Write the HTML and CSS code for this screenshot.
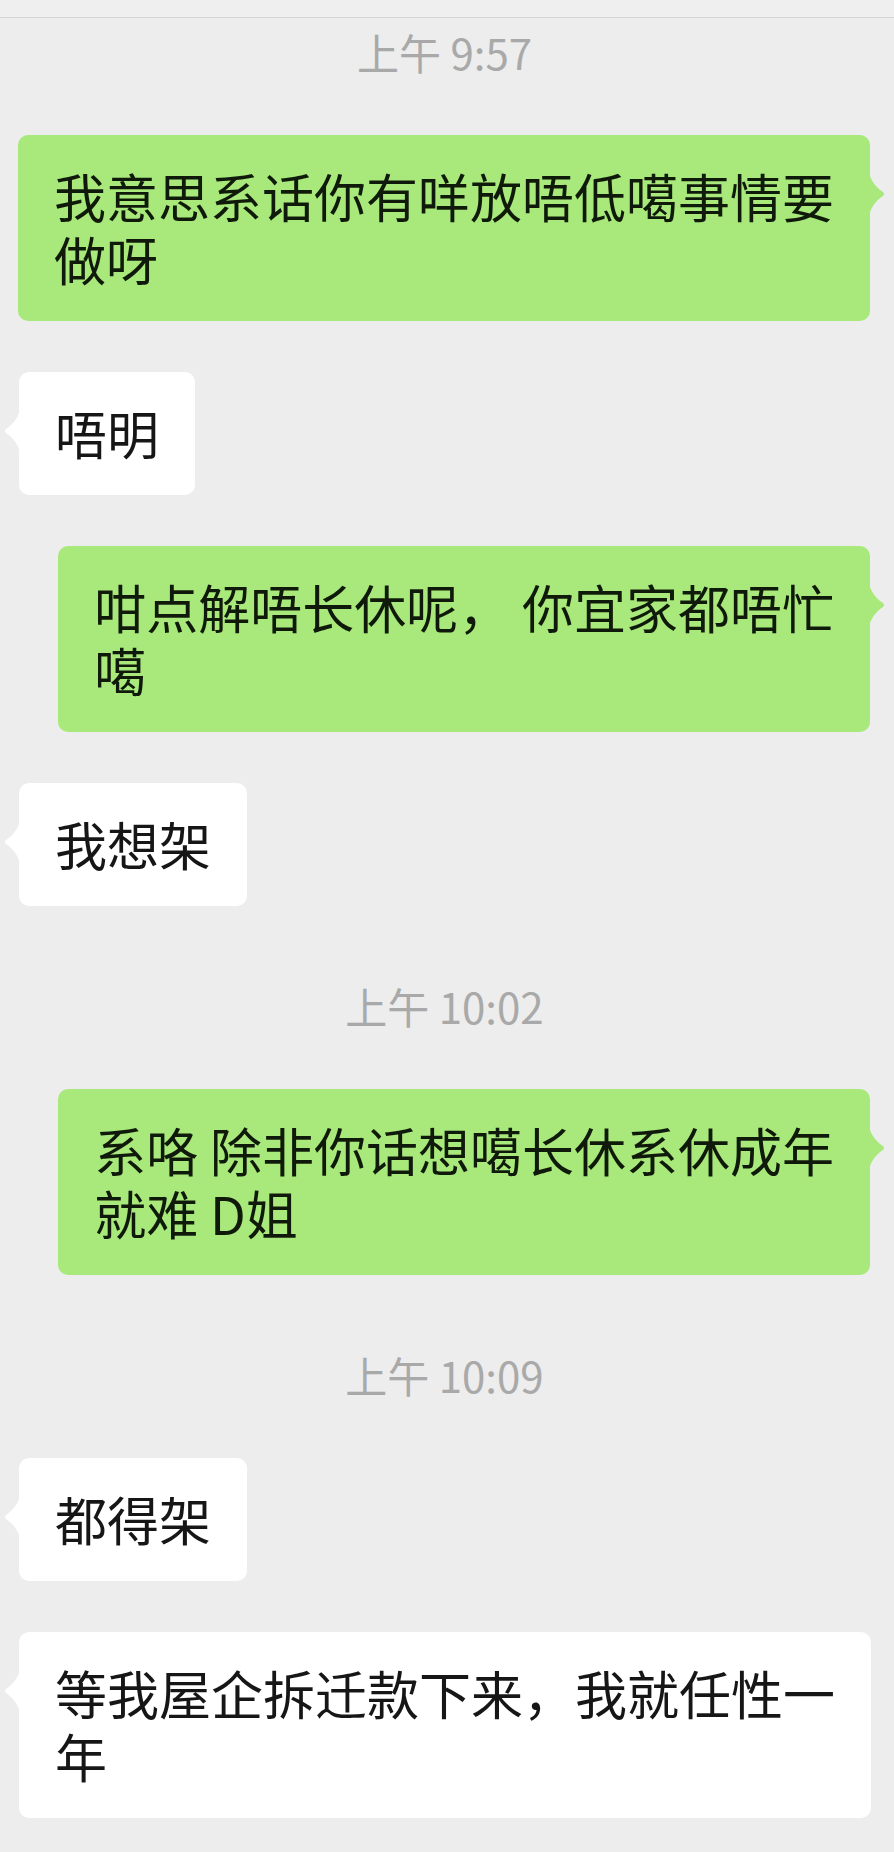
FILE: index.html
```html
<!DOCTYPE html>
<html lang="zh">
<head>
  <meta charset="UTF-8">
  <meta name="viewport" content="width=device-width, initial-scale=1.0">
  <title>聊天记录</title>
  <link rel="stylesheet" href="styles.css">
</head>
<body>

  <div class="top-bar"></div>

  <div class="chat">
    <div class="time first">上午 9:57</div>
    <div class="msg out">我意思系话你有咩放唔低噶事情要<br>做呀</div>
    <div class="msg in">唔明</div>
    <div class="msg out">咁点解唔长休呢， 你宜家都唔忙<br>噶</div>
    <div class="msg in">我想架</div>

    <div class="time">上午 10:02</div>
    <div class="msg out">系咯 除非你话想噶长休系休成年<br>就难 D姐</div>

    <div class="time">上午 10:09</div>
    <div class="msg in">都得架</div>
    <div class="msg in">等我屋企拆迁款下来，我就任性一<br>年</div>
  </div>

</body>
</html>
```

FILE: styles.css
```css
/* General Styles */
body {
  margin: 0;
  padding: 0;
  background-color: #ededed;
  font-family: "Noto Sans CJK SC", "Noto Sans", sans-serif;
}

.top-bar {
  height: 17px;
  background-color: #efefef;
  border-bottom: 1px solid #d6d6d6;
}

.chat {
  display: flex;
  flex-direction: column;
  padding: 0 24px 40px 19px;
}

/* Timestamps */
.time {
  align-self: stretch;
  margin-top: 75px;
  font-size: 42px;
  line-height: 50px;
  height: 50px;
  text-align: center;
  color: #a9a9a9;
}

.time.first {
  margin-top: 9px;
}

/* Bubbles */
.msg {
  position: relative;
  margin-top: 51px;
  padding: 29px 36px 31px;
  font-size: 52px;
  line-height: 63px;
  white-space: nowrap;
  border-radius: 10px;
  color: #161616;
}

.time + .msg {
  margin-top: 58px;
}

.msg.in {
  align-self: flex-start;
  background-color: #ffffff;
}

.msg.out {
  align-self: flex-end;
  background-color: #a9e97b;
  color: #0f1a0a;
}

/* Bubble tails */
.msg::after {
  content: "";
  position: absolute;
  top: 38px;
  width: 16px;
  height: 42px;
  background-color: inherit;
}

.msg.out::after {
  right: -15px;
  clip-path: path("M0 0 C3 10 8 15 14 19 Q16 21 14 23 C8 27 3 32 0 42 Z");
}

.msg.in::after {
  left: -15px;
  clip-path: path("M16 0 C13 10 8 15 2 19 Q0 21 2 23 C8 27 13 32 16 42 Z");
}
```
